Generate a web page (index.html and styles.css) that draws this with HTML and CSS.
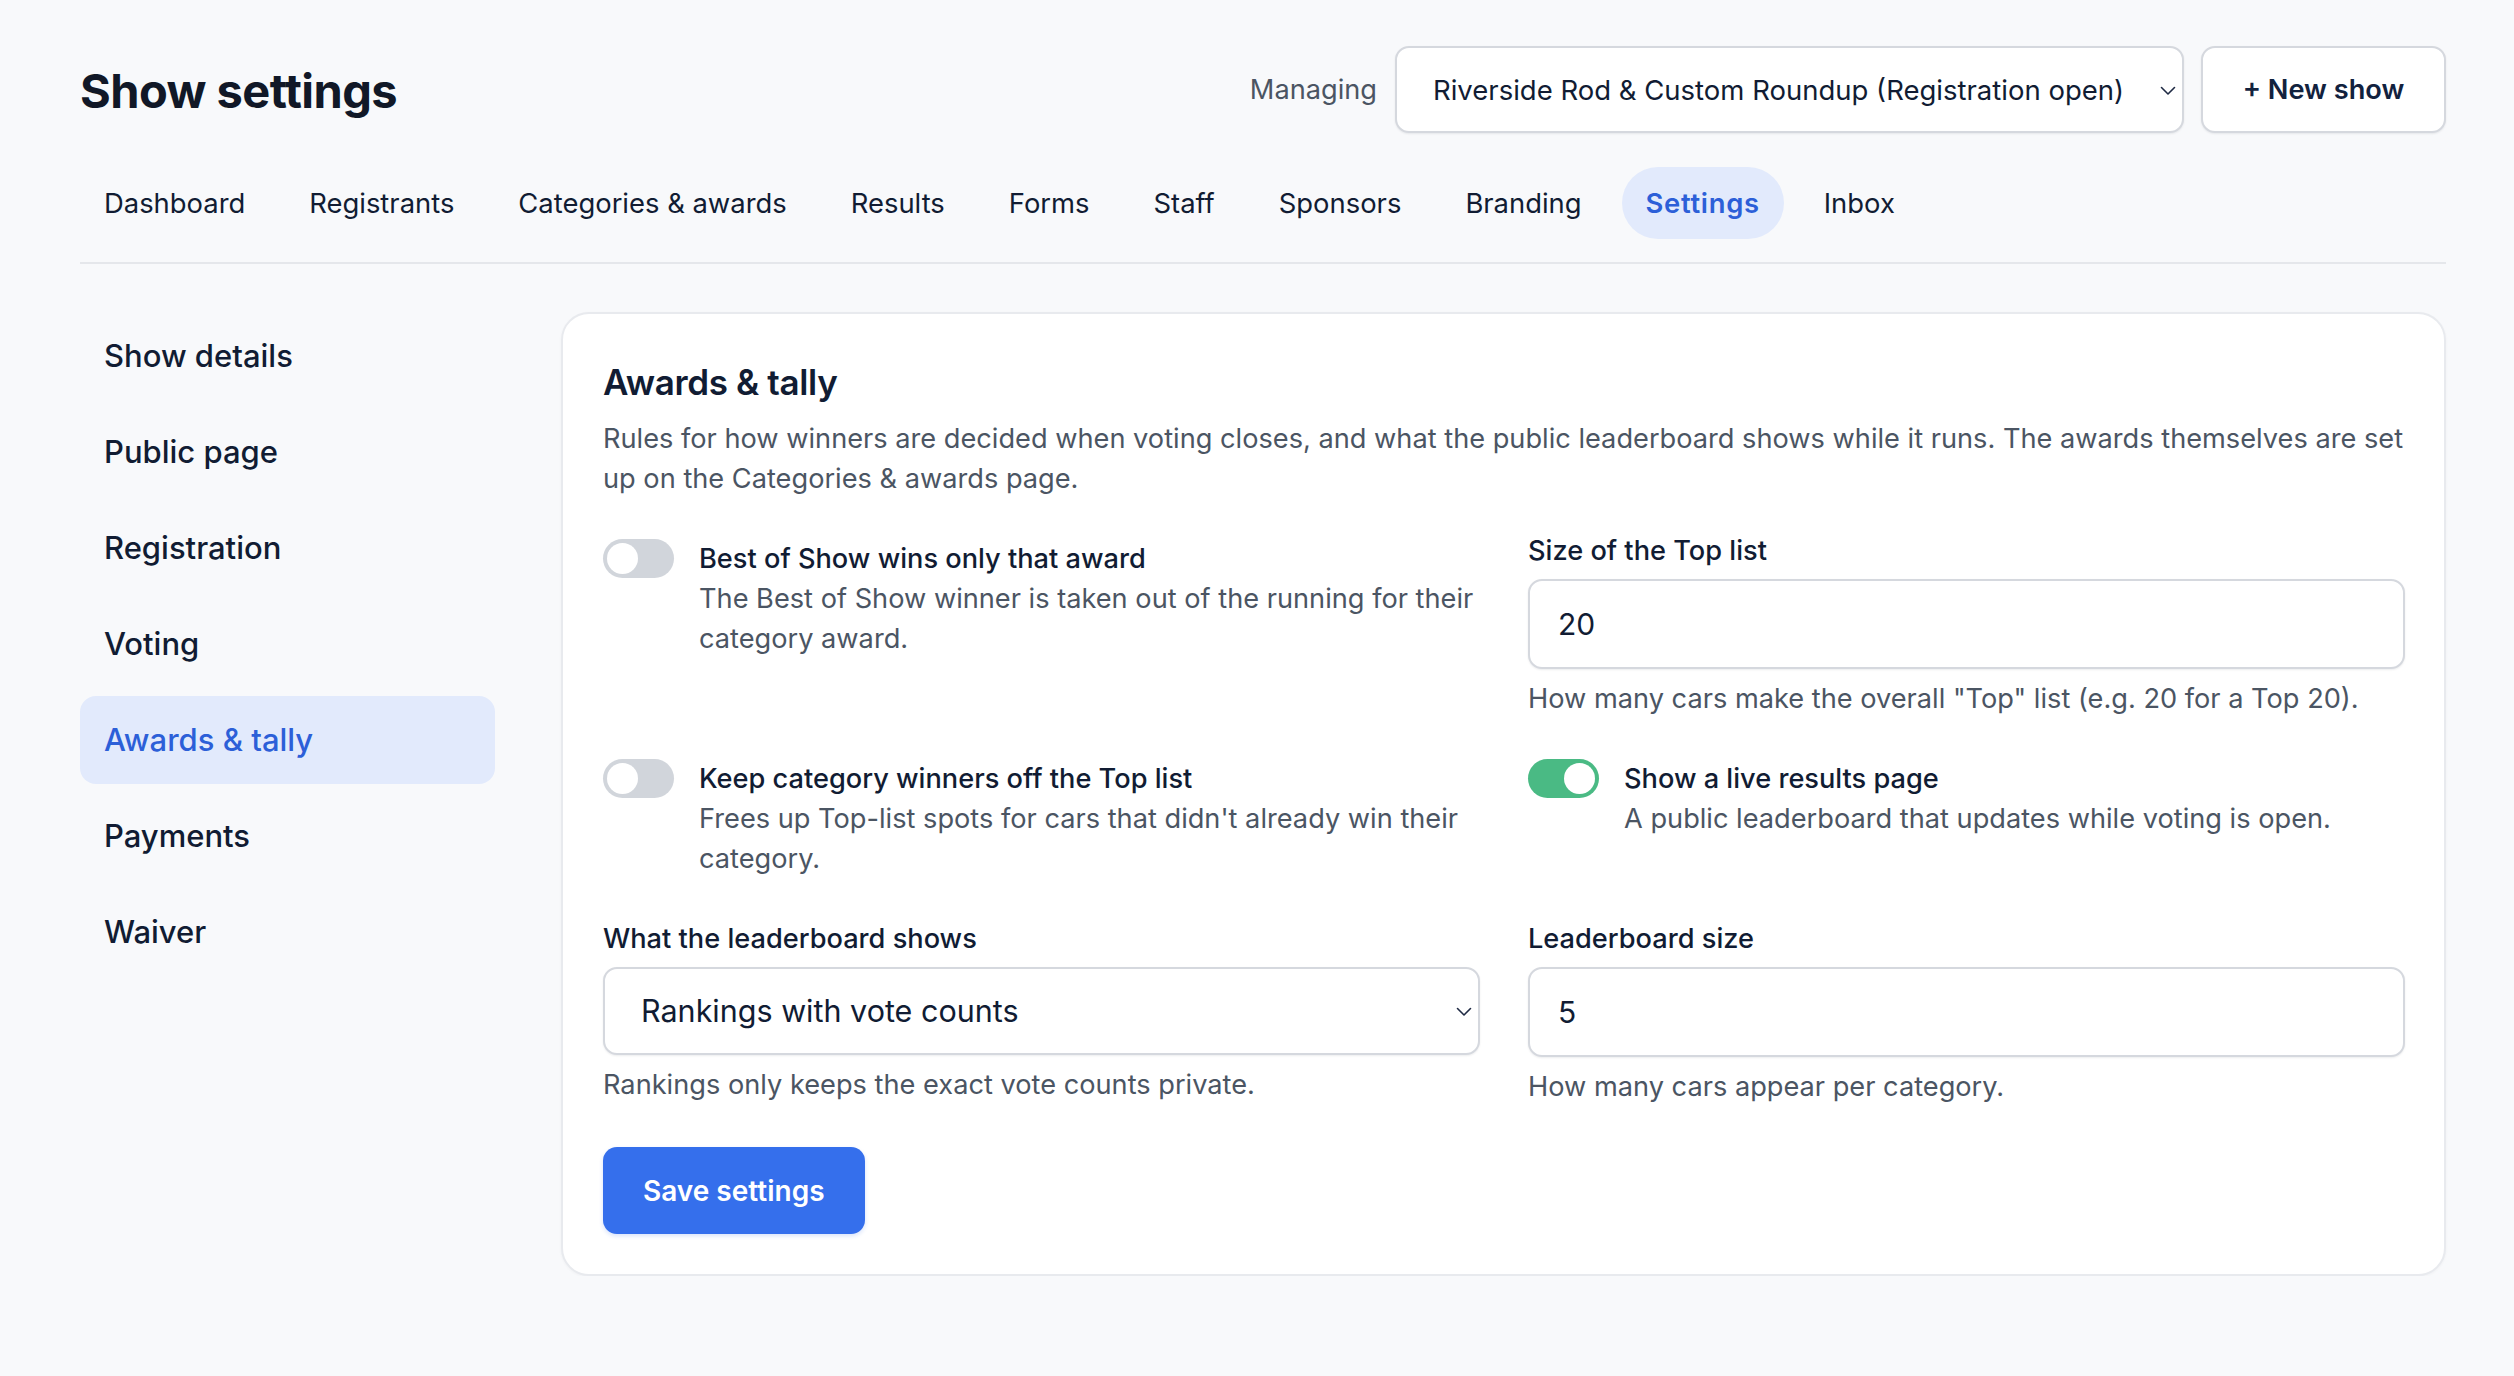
FILE: index.html
```html
<!DOCTYPE html>
<html lang="en">
<head>
<meta charset="utf-8">
<title>Show settings</title>
<link rel="stylesheet" href="styles.css">
</head>
<body>
<div class="page">
  <header class="topbar">
    <h1 class="title">Show settings</h1>
    <div class="manage">
      <span class="manage-label">Managing</span>
      <div class="select-wrap select-show">
        <select class="select">
          <option>Riverside Rod &amp; Custom Roundup (Registration open)</option>
        </select>
        <svg class="chev" width="16" height="10" viewBox="0 0 16 10"><path d="M1.5 1.5 8 8l6.5-6.5" fill="none" stroke="currentColor" stroke-width="1.6" stroke-linecap="round" stroke-linejoin="round"/></svg>
      </div>
      <button class="btn-outline" type="button">+ New show</button>
    </div>
  </header>

  <nav class="tabs">
    <a class="tab">Dashboard</a>
    <a class="tab">Registrants</a>
    <a class="tab">Categories &amp; awards</a>
    <a class="tab">Results</a>
    <a class="tab">Forms</a>
    <a class="tab">Staff</a>
    <a class="tab">Sponsors</a>
    <a class="tab">Branding</a>
    <a class="tab tab-active">Settings</a>
    <a class="tab">Inbox</a>
  </nav>

  <div class="layout">
    <aside class="side">
      <a class="side-item">Show details</a>
      <a class="side-item">Public page</a>
      <a class="side-item">Registration</a>
      <a class="side-item">Voting</a>
      <a class="side-item side-active">Awards &amp; tally</a>
      <a class="side-item">Payments</a>
      <a class="side-item">Waiver</a>
    </aside>

    <section class="card">
      <h2 class="card-title">Awards &amp; tally</h2>
      <p class="card-desc">Rules for how winners are decided when voting closes, and what the public leaderboard shows while it runs. The awards themselves are set up on the Categories &amp; awards page.</p>

      <div class="grid">
        <div class="toggle-field">
          <span class="toggle"><span class="knob"></span></span>
          <div class="toggle-text">
            <div class="toggle-label">Best of Show wins only that award</div>
            <div class="toggle-sub">The Best of Show winner is taken out of the running for their category award.</div>
          </div>
        </div>

        <div class="field">
          <label class="field-label">Size of the Top list</label>
          <input class="input" type="text" value="20">
          <div class="help">How many cars make the overall "Top" list (e.g. 20 for a Top 20).</div>
        </div>

        <div class="toggle-field">
          <span class="toggle"><span class="knob"></span></span>
          <div class="toggle-text">
            <div class="toggle-label">Keep category winners off the Top list</div>
            <div class="toggle-sub">Frees up Top-list spots for cars that didn't already win their category.</div>
          </div>
        </div>

        <div class="toggle-field">
          <span class="toggle toggle-on"><span class="knob"></span></span>
          <div class="toggle-text">
            <div class="toggle-label">Show a live results page</div>
            <div class="toggle-sub">A public leaderboard that updates while voting is open.</div>
          </div>
        </div>

        <div class="field">
          <label class="field-label">What the leaderboard shows</label>
          <div class="select-wrap select-board">
            <select class="select">
              <option>Rankings with vote counts</option>
            </select>
            <svg class="chev" width="16" height="10" viewBox="0 0 16 10"><path d="M1.5 1.5 8 8l6.5-6.5" fill="none" stroke="currentColor" stroke-width="1.6" stroke-linecap="round" stroke-linejoin="round"/></svg>
          </div>
          <div class="help">Rankings only keeps the exact vote counts private.</div>
        </div>

        <div class="field">
          <label class="field-label">Leaderboard size</label>
          <input class="input" type="text" value="5">
          <div class="help">How many cars appear per category.</div>
        </div>
      </div>

      <button class="btn-primary" type="button">Save settings</button>
    </section>
  </div>
</div>
</body>
</html>
```

FILE: styles.css
```css
* { box-sizing: border-box; }

html, body {
  margin: 0;
  padding: 0;
  background: #f8f9fb;
}

body {
  font-family: "Inter", "Noto Sans", "Liberation Sans", sans-serif;
  color: #111c33;
  font-size: 27.2px;
  line-height: 40px;
}

.page {
  padding: 46px 68px 0 80px;
}

/* header */
.topbar {
  display: flex;
  align-items: center;
  justify-content: space-between;
  height: 87px;
}

.title {
  margin: 3px 0 0;
  font-size: 47px;
  line-height: 56px;
  font-weight: 700;
  letter-spacing: -0.012em;
  color: #111827;
}

.manage {
  display: flex;
  align-items: center;
  height: 87px;
}

.manage-label {
  color: #4b5563;
  margin-right: 18px;
}

.select-wrap {
  position: relative;
  display: block;
}

.select {
  appearance: none;
  -webkit-appearance: none;
  display: block;
  width: 100%;
  margin: 0;
  font: inherit;
  color: #111c33;
  background: #fff;
  border: 2px solid #d5d8de;
  border-radius: 14px;
  box-shadow: 0 1px 2px rgba(16, 24, 40, 0.08);
  outline: none;
}

.select-show {
  width: 789px;
}

.select-show .select {
  height: 87px;
  padding: 0 50px 0 36px;
  font-size: 27.5px;
}

.chev {
  position: absolute;
  right: 8px;
  top: 50%;
  margin-top: -4px;
  color: #1f2a44;
  pointer-events: none;
}

.btn-outline {
  margin-left: 17px;
  height: 87px;
  width: 245px;
  font: inherit;
  font-weight: 600;
  color: #12223e;
  background: #fff;
  border: 2px solid #d5d8de;
  border-radius: 14px;
  box-shadow: 0 1px 2px rgba(16, 24, 40, 0.08);
  padding: 0;
}

/* tabs */
.tabs {
  display: flex;
  gap: 16px;
  margin-top: 34px;
  padding-bottom: 23px;
  border-bottom: 2px solid #e5e7eb;
}

.tab {
  display: block;
  padding: 16px 24px;
  border-radius: 999px;
  font-size: 27.4px;
  color: #111c33;
}

.tab-active {
  background: #e2eafc;
  color: #2c5fd8;
  font-weight: 600;
  letter-spacing: 0.7px;
}

/* layout */
.layout {
  display: flex;
  align-items: flex-start;
  gap: 66px;
  margin-top: 48px;
}

.side {
  flex: none;
  width: 415px;
  display: flex;
  flex-direction: column;
  gap: 8px;
}

.side-item {
  display: flex;
  align-items: center;
  height: 88px;
  padding: 0 24px;
  border-radius: 16px;
  font-size: 31px;
  font-weight: 500;
  color: #111c33;
}

.side-active {
  background: #e2eafc;
  color: #2c5fd8;
}

.card {
  flex: 1;
  background: #fff;
  border: 2px solid #e8eaee;
  border-radius: 28px;
  padding: 40px 39px 40px 40px;
  box-shadow: 0 1px 3px rgba(16, 24, 40, 0.04);
}

.card-title {
  margin: 0;
  font-size: 35px;
  line-height: 56px;
  font-weight: 600;
  color: #111c33;
  letter-spacing: -0.01em;
}

.card-desc {
  margin: 9px 0 0;
  color: #4b5563;
}

.grid {
  display: grid;
  grid-template-columns: 1fr 1fr;
  column-gap: 48px;
  row-gap: 32px;
  margin-top: 32px;
}

.toggle-field {
  display: flex;
  align-items: flex-start;
  gap: 25px;
  padding: 8px 0;
}

.toggle {
  flex: none;
  position: relative;
  display: block;
  width: 71px;
  height: 39px;
  border-radius: 20px;
  background: #d1d5db;
}

.knob {
  position: absolute;
  top: 4px;
  left: 4px;
  width: 31px;
  height: 31px;
  border-radius: 50%;
  background: #fff;
}

.toggle-on {
  background: #4aba84;
}

.toggle-on .knob {
  left: auto;
  right: 4px;
}

.toggle-label {
  font-weight: 500;
  color: #111c33;
}

.toggle-sub {
  color: #4b5563;
}

.field {
  display: flex;
  flex-direction: column;
}

.field-label {
  font-weight: 500;
  color: #111c33;
}

.input {
  display: block;
  width: 100%;
  height: 90px;
  margin: 8px 0 0;
  padding: 0 28px;
  font: inherit;
  font-size: 30px;
  color: #111c33;
  background: #fff;
  border: 2px solid #d5d8de;
  border-radius: 14px;
  box-shadow: 0 1px 2px rgba(16, 24, 40, 0.08);
  outline: none;
}

.select-board {
  margin-top: 8px;
}

.select-board .select {
  height: 88px;
  padding: 0 50px 0 36px;
  font-size: 30.5px;
}

.help {
  margin-top: 10px;
  color: #4b5563;
}

.btn-primary {
  display: block;
  margin-top: 40px;
  height: 87px;
  padding: 0 40px;
  font: inherit;
  font-size: 28px;
  font-weight: 600;
  color: #fff;
  background: #356fec;
  border: none;
  border-radius: 14px;
  box-shadow: 0 2px 4px rgba(37, 99, 235, 0.18);
}
```
